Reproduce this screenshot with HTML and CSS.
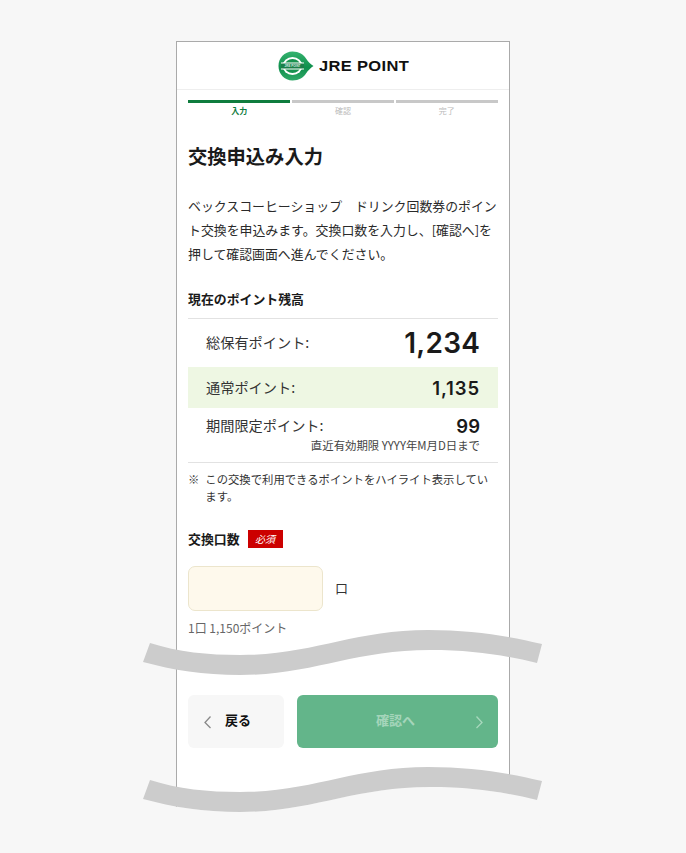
FILE: index.html
```html
<!DOCTYPE html>
<html lang="ja">
<head>
    <meta charset="UTF-8">
    <title>交換申込み入力</title>
    <link rel="stylesheet" href="styles.css">
</head>
<body>
    <div class="page">
        <div class="frame">
            <header class="brand">
                <svg class="brand-mark" width="36" height="30" viewBox="0 0 36 30">
                    <defs>
                        <linearGradient id="leaf" x1="0" y1="0" x2="0" y2="1">
                            <stop offset="0" stop-color="#35b36f"/>
                            <stop offset="0.55" stop-color="#0f8f4c"/>
                            <stop offset="1" stop-color="#2fa968"/>
                        </linearGradient>
                    </defs>
                    <path d="M14.5 0.5C21 0.5 25.500 3.500 28 7.500C30 10.500 32.500 13 35.500 15C32.500 17 30 19.500 28 22.500C25.500 26.500 21 29.500 14.500 29.500C6.500 29.500 0.500 23 0.500 15C0.500 7 6.500 0.500 14.500 0.500Z" fill="url(#leaf)"/>
                    <ellipse cx="14.500" cy="15" rx="10" ry="9" fill="#fff"/>
                    <ellipse cx="14.500" cy="15" rx="8" ry="7" fill="#17924f"/>
                    <rect x="3" y="11.500" width="23" height="7" fill="#fff"/>
                    <rect x="3" y="12.500" width="23" height="5" fill="#1b7f49"/>
                    <text x="14.500" y="16.300" class="brand-mark-text" text-anchor="middle">JRE POINT</text>
                </svg>
                <span class="brand-name">JRE POINT</span>
            </header>

            <div class="steps">
                <div class="step active"><span>入力</span></div>
                <div class="step"><span>確認</span></div>
                <div class="step"><span>完了</span></div>
            </div>

            <main class="content">
                <h1>交換申込み入力</h1>
                <p class="lead">ベックスコーヒーショップ　ドリンク回数券のポイント交換を申込みます。交換口数を入力し、[確認へ]を押して確認画面へ進んでください。</p>

                <h2>現在のポイント残高</h2>
                <div class="balance">
                    <div class="row total">
                        <span class="row-label">総保有ポイント:</span>
                        <span class="row-value">1,234</span>
                    </div>
                    <div class="row normal">
                        <span class="row-label">通常ポイント:</span>
                        <span class="row-value">1,135</span>
                    </div>
                    <div class="row limited">
                        <div class="limited-line">
                            <span class="row-label">期間限定ポイント:</span>
                            <span class="row-value">99</span>
                        </div>
                        <div class="limit-date">直近有効期限 YYYY年M月D日まで</div>
                    </div>
                </div>
                <p class="note"><span>※</span><span>この交換で利用できるポイントをハイライト表示しています。</span></p>

                <div class="field-label">
                    <span>交換口数</span>
                    <span class="required">必須</span>
                </div>
                <div class="field">
                    <input class="count" type="text">
                    <span class="unit">口</span>
                </div>
                <p class="hint">1口 1,150ポイント</p>

                <div class="actions">
                    <button class="back" type="button">
                        <svg width="9" height="14" viewBox="0 0 9 14"><path d="M7.500 1.500L2 7.500L7.500 13" fill="none" stroke="#8a8a8a" stroke-width="1.300"/></svg>
                        <span>戻る</span>
                    </button>
                    <button class="next" type="button" disabled>
                        <span>確認へ</span>
                        <svg width="9" height="14" viewBox="0 0 9 14"><path d="M1.500 1.500L7 7.500L1.500 13" fill="none" stroke="#a8d8bd" stroke-width="1.300"/></svg>
                    </button>
                </div>
            </main>
        </div>

        <svg class="wave wave-top" width="400" height="46" viewBox="0 0 400 46">
            <path d="M7 13C35 22 65 25 97 25C170 25 210 0 285 0C330 0 365 6 399 14L394 33C360 25 330 20 287 20C210 20 170 45 97 45C60 45 30 40 0 32Z" fill="#cccccc"/>
        </svg>
        <svg class="wave wave-bottom" width="400" height="86" viewBox="0 0 400 86">
            <path d="M0 32C30 40 60 45 97 45C170 45 210 20 287 20C330 20 360 25 394 33L400 86L0 86Z" fill="#f7f7f7"/>
            <path d="M7 13C35 22 65 25 97 25C170 25 210 0 285 0C330 0 365 6 399 14L394 33C360 25 330 20 287 20C210 20 170 45 97 45C60 45 30 40 0 32Z" fill="#cccccc"/>
        </svg>
    </div>
</body>
</html>
```

FILE: styles.css
```css
* {
    box-sizing: border-box;
}
body {
    margin: 0;
    background: #f7f7f7;
    color: #222;
    font-family: "Noto Sans CJK JP", "Noto Sans", sans-serif;
}
.page {
    position: relative;
    height: 853px;
    overflow: hidden;
    padding-top: 41px;
}
.frame {
    width: 334px;
    height: 780px;
    margin: 0 auto;
    background: #fff;
    border: 1px solid #aaa;
    border-bottom: 0;
}
.brand {
    display: flex;
    align-items: center;
    gap: 5px;
    height: 48px;
    padding-left: 101px;
    border-bottom: 1px solid #eee;
}
.brand-mark-text {
    font-family: "Liberation Sans", sans-serif;
    font-size: 3px;
    font-weight: bold;
    fill: #d8efe0;
}
.brand-name {
    font-family: "Liberation Sans", sans-serif;
    font-size: 15px;
    font-weight: bold;
    letter-spacing: 0.3px;
    color: #111;
    transform: scaleX(1.1);
    transform-origin: left center;
    white-space: nowrap;
}
.steps {
    display: flex;
    gap: 1.500px;
    padding: 10px 11px 0;
}
.step {
    flex: 1;
    border-top: 3px solid #c8c8c8;
    padding-top: 2px;
    text-align: center;
    font-size: 8px;
    line-height: 12px;
    color: #bbb;
}
.step.active {
    border-top-color: #0f7c3e;
    color: #0f7c3e;
    font-weight: bold;
}
.content {
    padding: 0 11px;
}
h1 {
    margin: 24px 0 0;
    font-size: 19.300px;
    line-height: 30px;
    font-weight: bold;
    color: #1a1a1a;
}
.lead {
    margin: 23px 0 0;
    font-size: 12.900px;
    line-height: 24px;
    color: #2a2a2a;
}
h2 {
    margin: 23px 0 0;
    font-size: 12.900px;
    line-height: 20px;
    font-weight: bold;
    color: #1a1a1a;
}
.balance {
    margin-top: 9px;
    border-top: 1px solid #e2e2e2;
    border-bottom: 1px solid #e2e2e2;
}
.row {
    padding: 0 18px;
}
.row-label {
    font-size: 14.200px;
    color: #333;
    position: relative;
    top: -1px;
}
.row-value {
    font-family: Inter, "Liberation Sans", sans-serif;
    font-weight: 600;
    color: #1a1a1a;
}
.total,
.normal {
    display: flex;
    align-items: center;
    justify-content: space-between;
}
.total {
    height: 48px;
}
.total .row-value {
    font-size: 28px;
    letter-spacing: 0.2px;
}
.normal {
    height: 41px;
    background: #eef7e3;
}
.normal .row-value {
    font-size: 18.500px;
    letter-spacing: 0.9px;
}
.limited {
    height: 54px;
    padding-top: 7px;
}
.limited-line {
    display: flex;
    align-items: center;
    justify-content: space-between;
    height: 22px;
}
.limited .row-value {
    font-size: 18.500px;
}
.limit-date {
    margin-top: 1px;
    font-size: 11.400px;
    line-height: 14px;
    text-align: right;
    color: #444;
}
.note {
    display: flex;
    gap: 6px;
    margin: 8px 0 0;
    font-size: 11.350px;
    line-height: 17px;
    color: #333;
}
.field-label {
    display: flex;
    align-items: center;
    gap: 8px;
    margin-top: 24px;
    font-size: 12.900px;
    font-weight: bold;
    color: #1a1a1a;
}
.required {
    width: 35px;
    height: 18px;
    background: #cc0000;
    color: #fff;
    font-size: 10px;
    font-style: italic;
    font-weight: normal;
    line-height: 18px;
    text-align: center;
}
.field {
    display: flex;
    align-items: center;
    gap: 12px;
    margin-top: 18px;
}
.count {
    width: 135px;
    height: 45px;
    background: #fef9ec;
    border: 1px solid #ece5cc;
    border-radius: 7px;
}
.unit {
    font-size: 13px;
    color: #333;
    position: relative;
    top: -1px;
}
.hint {
    margin: 8px 0 0;
    font-size: 12px;
    line-height: 18px;
    color: #666;
}
.actions {
    display: flex;
    gap: 13px;
    margin-top: 58px;
}
.actions button {
    display: flex;
    align-items: center;
    height: 53px;
    border: 0;
    border-radius: 6px;
    font-family: inherit;
    font-size: 13px;
    font-weight: bold;
}
.actions button span {
    position: relative;
    top: -2px;
}
.back {
    width: 96px;
    gap: 13px;
    padding: 0 0 0 15px;
    background: #f7f7f7;
    color: #111;
}
.next {
    flex: 1;
    justify-content: space-between;
    padding: 0 14px 0 79px;
    background: #63b58a;
    color: #a5d5bb;
}
.wave {
    position: absolute;
    left: 143px;
}
.wave-top {
    top: 630px;
}
.wave-bottom {
    top: 767px;
}
```
